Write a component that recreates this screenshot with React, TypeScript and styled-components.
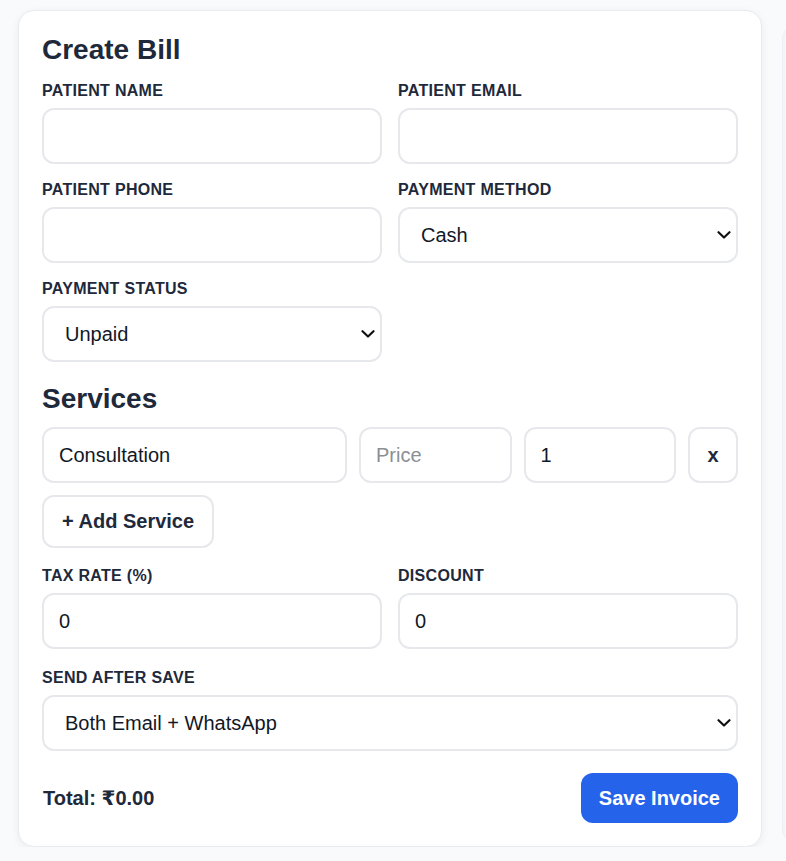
import React, { ReactNode } from 'react'
import styled, { createGlobalStyle } from 'styled-components'

const GlobalStyle = createGlobalStyle`
	* {
		box-sizing: border-box;
	}

	body {
		margin: 0;
		background: #f8fafc;
		font-family: "Liberation Sans", Arial, "DejaVu Sans", sans-serif;
		color: #1e293b;
		overflow: hidden;
	}
`

const Page = styled.div`
	display: flex;
	gap: 20px;
	padding: 10px 0 0 18px;
	width: 100vw;
	overflow: hidden;
`

const Card = styled.section`
	flex: 0 0 744px;
	background: #ffffff;
	border: 1px solid #e8ebef;
	border-radius: 16px;
	box-shadow: 0 2px 8px rgba(15, 23, 42, 0.06);
	padding: 23px;
`

const SidePanel = styled.aside`
	flex: 0 0 400px;
	margin-top: 14px;
	height: 820px;
	background: #f3f5f8;
	border-left: 1px solid #eceff3;
	border-radius: 16px 0 0 16px;
`

const Title = styled.h2`
	margin: 0 0 15px;
	font-size: 28px;
	font-weight: 700;
	line-height: 32px;
	color: #1e293b;
`

const SectionTitle = styled.h3`
	margin: 21px 0 12px;
	font-size: 28px;
	font-weight: 700;
	line-height: 32px;
	color: #1e293b;
`

const FieldGrid = styled.div<{ $top?: number }>`
	display: grid;
	grid-template-columns: 1fr 1fr;
	column-gap: 16px;
	row-gap: 16px;
	margin-top: ${p => p.$top ?? 0}px;
`

const Field = styled.div<{ $top?: number }>`
	display: flex;
	flex-direction: column;
	margin-top: ${p => p.$top ?? 0}px;
`

const Label = styled.label`
	display: block;
	margin-bottom: 8px;
	font-size: 16px;
	font-weight: 700;
	line-height: 19px;
	letter-spacing: 0.3px;
	text-transform: uppercase;
	color: #1e293b;
`

const controlBase = `
	width: 100%;
	height: 56px;
	border: 2px solid #e6e8ec;
	border-radius: 12px;
	background: #ffffff;
	font-family: "Liberation Sans", Arial, sans-serif;
	font-size: 20px;
	color: #111827;
	outline: none;
`

const Input = styled.input`
	${controlBase}
	padding: 0 15px;

	&::placeholder {
		color: #8b8f96;
	}
`

const SelectWrap = styled.div`
	position: relative;

	svg {
		position: absolute;
		right: 7px;
		top: 50%;
		margin-top: -4px;
		pointer-events: none;
	}
`

const NativeSelect = styled.select`
	${controlBase}
	appearance: none;
	padding: 0 32px 0 21px;
`

const ServiceRow = styled.div`
	display: grid;
	grid-template-columns: 2fr 1fr 1fr 50px;
	gap: 12px;
	margin-bottom: 12px;
`

const RemoveButton = styled.button`
	height: 56px;
	border: 2px solid #e6e8ec;
	border-radius: 12px;
	background: #ffffff;
	font-family: "Liberation Sans", Arial, sans-serif;
	font-size: 20px;
	font-weight: 700;
	color: #1e293b;
	padding: 0;
`

const GhostButton = styled.button`
	height: 53px;
	padding: 0 18px;
	border: 2px solid #e6e8ec;
	border-radius: 12px;
	background: #ffffff;
	font-family: "Liberation Sans", Arial, sans-serif;
	font-size: 20px;
	font-weight: 700;
	color: #1e293b;
`

const Footer = styled.div`
	display: flex;
	align-items: center;
	justify-content: space-between;
	margin-top: 22px;
`

const Total = styled.div`
	padding-left: 1px;
	font-size: 20px;
	font-weight: 700;
	color: #1e293b;
`

const PrimaryButton = styled.button`
	height: 50px;
	padding: 0 18px;
	border: none;
	border-radius: 12px;
	background: #2563eb;
	font-family: "Liberation Sans", Arial, sans-serif;
	font-size: 20px;
	font-weight: 700;
	color: #ffffff;
`

function Select({ defaultValue, children }: { defaultValue: string; children: ReactNode }) {
	return (
		<SelectWrap>
			<NativeSelect defaultValue={defaultValue}>{children}</NativeSelect>
			<svg width='14' height='8' viewBox='0 0 14 8' fill='none'>
				<path d='M1.5 1.2 L7 6.5 L12.5 1.2' stroke='#111' strokeWidth='2.2' strokeLinecap='round' strokeLinejoin='round' />
			</svg>
		</SelectWrap>
	)
}

export default function App() {
	return (
		<>
			<GlobalStyle />
			<Page>
				<Card>
					<Title>Create Bill</Title>
					<FieldGrid>
						<Field>
							<Label>Patient Name</Label>
							<Input type='text' />
						</Field>
						<Field>
							<Label>Patient Email</Label>
							<Input type='email' />
						</Field>
						<Field>
							<Label>Patient Phone</Label>
							<Input type='tel' />
						</Field>
						<Field>
							<Label>Payment Method</Label>
							<Select defaultValue='cash'>
								<option value='cash'>Cash</option>
								<option value='card'>Card</option>
								<option value='upi'>UPI</option>
							</Select>
						</Field>
						<Field>
							<Label>Payment Status</Label>
							<Select defaultValue='unpaid'>
								<option value='unpaid'>Unpaid</option>
								<option value='paid'>Paid</option>
							</Select>
						</Field>
					</FieldGrid>

					<SectionTitle>Services</SectionTitle>
					<ServiceRow>
						<Input type='text' defaultValue='Consultation' />
						<Input type='number' placeholder='Price' />
						<Input type='number' defaultValue='1' />
						<RemoveButton>x</RemoveButton>
					</ServiceRow>
					<GhostButton>+ Add Service</GhostButton>

					<FieldGrid $top={18}>
						<Field>
							<Label>Tax Rate (%)</Label>
							<Input type='number' defaultValue='0' />
						</Field>
						<Field>
							<Label>Discount</Label>
							<Input type='number' defaultValue='0' />
						</Field>
					</FieldGrid>

					<Field $top={19}>
						<Label>Send After Save</Label>
						<Select defaultValue='both'>
							<option value='none'>Do not send</option>
							<option value='email'>Email</option>
							<option value='whatsapp'>WhatsApp</option>
							<option value='both'>Both Email + WhatsApp</option>
						</Select>
					</Field>

					<Footer>
						<Total>Total: ₹0.00</Total>
						<PrimaryButton>Save Invoice</PrimaryButton>
					</Footer>
				</Card>
				<SidePanel />
			</Page>
		</>
	)
}
